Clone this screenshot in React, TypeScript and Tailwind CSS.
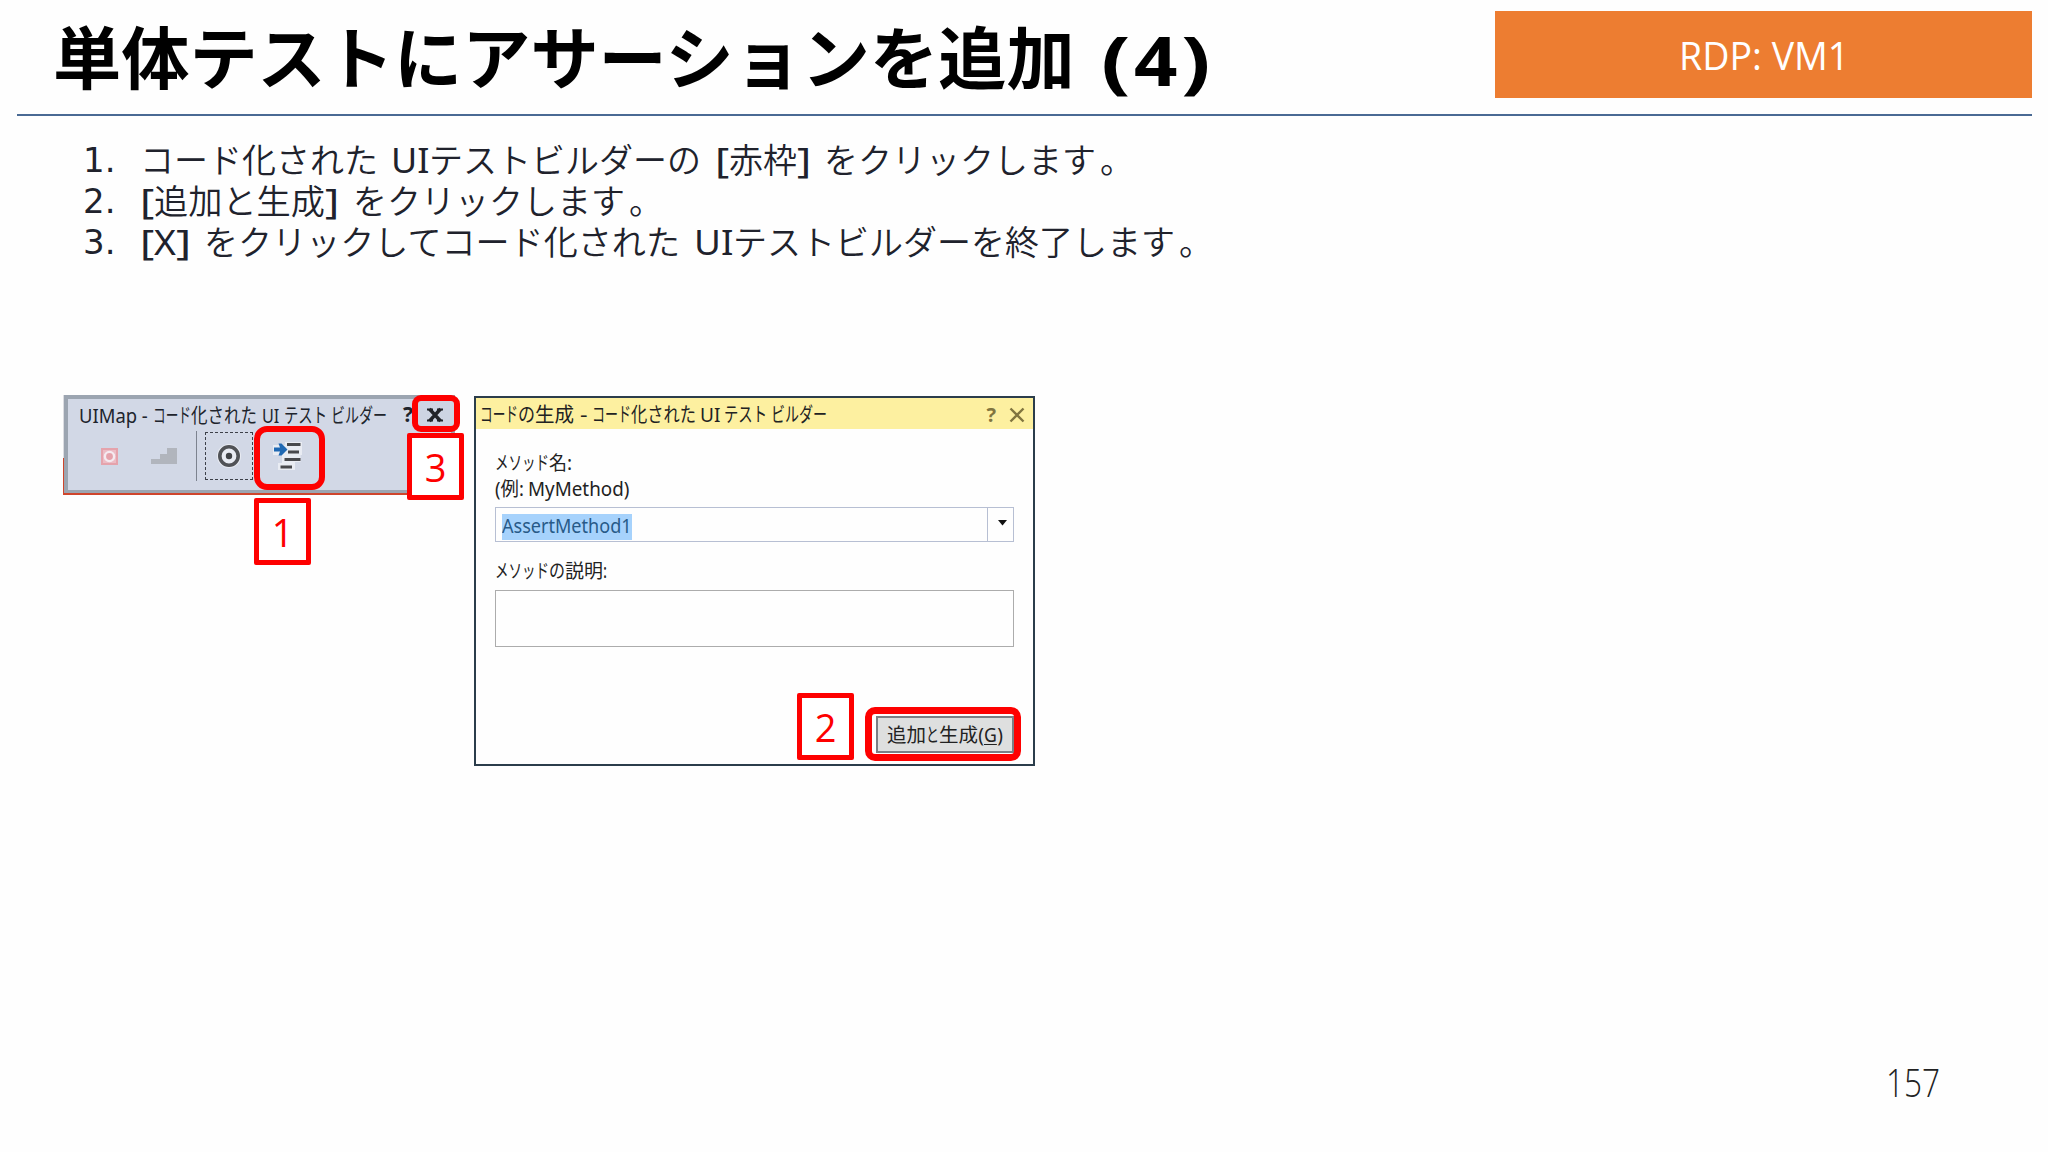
import React, { useLayoutEffect, useRef, useState } from 'react';

type Segment = [text: string, width: number];

interface RunProps {
  text: string;
  width: number;
  className?: string;
}

// Text squeezed or stretched to a fixed advance width
const Run: React.FC<RunProps> = ({ text, width, className = '' }) => {
  const ref = useRef<HTMLSpanElement>(null);
  const [scale, setScale] = useState(1);

  useLayoutEffect(() => {
    if (ref.current && ref.current.offsetWidth) {
      setScale(width / ref.current.offsetWidth);
    }
  }, [text, width]);

  return (
    <span className="inline-block whitespace-pre" style={{ width }}>
      <span
        ref={ref}
        className={`inline-block origin-left ${className}`}
        style={{ transform: `scaleX(${scale})` }}
      >
        {text}
      </span>
    </span>
  );
};

interface LineProps {
  segments: Segment[];
  className?: string;
  latinClassName?: string;
}

// An empty segment is a gap of the given width
const Line: React.FC<LineProps> = ({ segments, className = '', latinClassName = '' }) => (
  <div className={`flex ${className}`}>
    {segments.map(([text, width], i) =>
      text ? (
        <Run key={i} text={text} width={width} className={text.charCodeAt(0) < 128 ? latinClassName : ''} />
      ) : (
        <span key={i} style={{ width }} />
      )
    )}
  </div>
);

const STEPS: { no: string; segments: Segment[] }[] = [
  {
    no: '1.',
    segments: [
      ['コード化された', 238], ['', 13], ['UI', 38], ['テストビルダーの', 272], ['', 14], ['[', 14],
      ['赤枠', 68], [']', 14], ['', 13], ['をクリックします', 272], ['', 4], ['。', 34],
    ],
  },
  {
    no: '2.',
    segments: [
      ['[', 14], ['追加と生成', 171], [']', 14], ['', 14], ['をクリックします', 272], ['', 4], ['。', 34],
    ],
  },
  {
    no: '3.',
    segments: [
      ['[', 14], ['X', 22], [']', 15], ['', 13], ['をクリックしてコード化された', 476], ['', 14],
      ['UI', 39], ['テストビルダーを終了します', 442], ['', 4], ['。', 34],
    ],
  },
];

const Marker: React.FC<{ no: number; className: string }> = ({ no, className }) => (
  <div
    className={`absolute flex h-[67px] w-[57px] items-center justify-center rounded-[2px] border-[5px] border-[#fe0000] bg-white font-['Open_Sans',sans-serif] text-[38px] leading-none text-[#fe0000] ${className}`}
  >
    {no}
  </div>
);

const BuilderWindow = () => (
  <div className="relative flex h-[100px] w-[392px] border-b-2 border-b-[#cf452c]">
    {/* Sliver of the window behind */}
    <div className="flex w-px flex-col justify-end bg-[#dcdde2]">
      <div className="h-[35px] bg-[#cf452c]" />
    </div>
    <div className="h-[98px] grow border-4 border-b-[3px] border-[#9ca5b1] bg-[#d2d8e6]">
      <div className="flex h-[31px] items-center pl-[11px] pt-0.5 text-[20px] leading-[26px] text-[#20242c]">
        <Line
          segments={[
            ['UIMap -', 69], ['', 5], ['コード', 38], ['化された', 66], ['', 5], ['UI', 17],
            ['', 5], ['テスト', 43], ['', 4], ['ビルダー', 56],
          ]}
        />
        <span className="-mt-1 ml-[16px] text-[21px] font-bold">?</span>
      </div>
      <div className="flex h-[52px] items-start">
        <svg className="ml-[33px] mt-[18px]" width="17" height="17" viewBox="0 0 17 17" fill="none">
          <rect x="1" y="1" width="15" height="15" fill="#ecbcc5" stroke="#e5a3ac" strokeWidth="2" />
          <circle cx="8.500" cy="8.500" r="4.600" fill="#e5a3ac" stroke="#f5eaf0" strokeWidth="2.400" />
        </svg>
        <svg className="ml-[33px] mt-[17px]" width="27" height="18" viewBox="0 0 27 18">
          <path d="M0 17V12H9V7H16V1H26V17Z" fill="#b1b5bd" />
        </svg>
        <div className="ml-[18px] mt-px h-[50px] w-px bg-[#7d838f]" />
        <div className="ml-2 mt-[2px] flex h-12 w-12 items-center justify-center border border-dashed border-[#3c4048]">
          <svg width="26" height="26" viewBox="0 0 26 26" fill="none">
            <circle cx="13" cy="13" r="12" fill="#e8ebf2" />
            <circle cx="13" cy="13" r="9.200" stroke="#505256" strokeWidth="3.600" />
            <circle cx="13" cy="13" r="3.200" fill="#404246" />
          </svg>
        </div>
        <svg className="ml-[20px] mt-[11px]" width="32" height="30" viewBox="0 0 32 30">
          <path d="M0 4H12V1H29V14H27.500V21H22V29H5V22H9V14H0Z" fill="#e9ecf3" />
          <path d="M14 3.500H27.500M15 11H26M11.500 18.500H27.500M7.500 26H19" stroke="#48494d" strokeWidth="3.200" />
          <path d="M1 6.500H7L5.500 2.500H8.500L14.500 8.500L8.500 14.500H5.500L7 10.500H1Z" fill="#1f68b3" />
        </svg>
      </div>
    </div>

    {/* Callouts */}
    <div className="absolute left-[191px] top-[31px] h-[64px] w-[71px] rounded-[13px] border-[6px] border-[#fe0000]" />
    <div className="absolute left-[349px] top-0 flex h-[37px] w-[48px] items-center justify-center rounded-[9px] border-[6px] border-[#fe0000] bg-[#cdd4e3]">
      <svg className="-ml-0.5 mt-[2px]" width="20" height="16" viewBox="0 0 20 16">
        <path d="M2 2.500H8M12 2.500H18M2 13.500H8M12 13.500H18" stroke="#22242a" strokeWidth="2" />
        <path d="M4.500 2L15.500 14M15.500 2L4.500 14" stroke="#22242a" strokeWidth="3.400" />
      </svg>
    </div>
    <Marker no={3} className="left-[344px] top-[38px]" />
    <Marker no={1} className="left-[191px] top-[103px]" />
  </div>
);

const GenerateDialog = () => (
  <div className="relative flex h-[370px] w-[561px] flex-col border-2 border-[#2b3d4b] bg-[#fefefe] text-[19px] text-[#222]">
    <div className="flex h-[31px] shrink-0 items-center bg-[#fdf0a0] pl-[4px] pt-0.5 text-[20px] leading-[26px]">
      <Line
        segments={[
          ['コード', 38], ['の', 17], ['生成', 39], ['', 6], ['-', 7], ['', 5], ['コード', 39], ['化された', 65],
          ['', 4], ['UI', 20], ['', 4], ['テスト', 43], ['', 4], ['ビルダー', 56],
        ]}
      />
      <span className="ml-auto font-bold text-[#81753f]">?</span>
      <svg className="ml-[13px] mr-[8px]" width="16" height="16" viewBox="0 0 16 16">
        <path d="M1.500 1.500L14.500 14.500M14.500 1.500L1.500 14.500" stroke="#81753f" strokeWidth="2.400" />
      </svg>
    </div>

    <div className="flex grow flex-col px-[19px]">
      <div className="mt-[21px] leading-[26px]">
        <Line segments={[['メソッド', 54], ['名', 18], [':', 5]]} />
        <Line segments={[['(例:', 29], ['', 4], ['MyMethod)', 101]]} />
      </div>
      <div className="mt-[5px] flex h-[35px] w-[519px] shrink-0 border-[1.5px] border-[#b7bfd3] text-[20px]">
        <div className="grow pl-[6px] pt-[3px]">
          <span className="inline-block h-[26px] bg-[#a6d2fc] leading-[24px] text-[#285a88]">
            <Run text="AssertMethod1" width={130} />
          </span>
        </div>
        <div className="flex w-[26px] items-center justify-center border-l border-[#b7bfd3] pb-1 pl-1">
          <svg width="9" height="6" viewBox="0 0 9 6">
            <path d="M0 0H9L4.500 5.500Z" fill="#111" />
          </svg>
        </div>
      </div>
      <Line className="mt-[16px] leading-[26px]" segments={[['メソッド', 54], ['の', 16], ['説明', 38], [':', 4]]} />
      <div className="mt-[6px] h-[57px] w-[519px] shrink-0 border-[1.5px] border-[#acacac]" />
      <button className="ml-auto mt-[69px] flex h-[37px] w-[138px] items-center justify-center border-2 border-[#7b7e84] bg-[#dedfdf] leading-[26px]">
        <Run text="追加" width={39} />
        <Run text="と" width={13} />
        <Run text="生成" width={39} />
        <Run text="(" width={6} />
        <Run text="G" width={13} className="underline underline-offset-2" />
        <Run text=")" width={6} />
      </button>
    </div>

    {/* Callouts */}
    <div className="absolute left-[389px] top-[309px] h-[54px] w-[156px] rounded-[10px] border-[7px] border-[#fe0000]" />
    <Marker no={2} className="left-[321px] top-[295px]" />
  </div>
);

export default function App() {
  return (
    <div className="flex h-[1152px] w-[2048px] flex-col overflow-hidden bg-[#fefefe] font-['Noto_Sans','Noto_Sans_CJK_JP',sans-serif]">
      <header className="ml-[17px] flex h-[116px] w-[2015px] shrink-0 justify-between border-b-2 border-[#4a6a94]">
        <h1 className="flex items-center pl-[36px] font-bold leading-[90px] text-black">
          <span className="-mt-1 font-['Noto_Sans_CJK_JP',sans-serif] text-[68px]">
            <Run text="単体テストにアサーションを追加" width={1022} />
          </span>
          <Line
            className="pt-[3px] text-[69px]"
            segments={[['', 26], ['(', 29], ['', 4], ['4', 43], ['', 4], [')', 29]]}
          />
        </h1>
        <div className="mt-[11px] flex h-[87px] w-[537px] items-center justify-center bg-[#ed7d31] pt-px text-[38px] text-white font-['Open_Sans',sans-serif]">
          <Run text="RDP: VM1" width={170} />
        </div>
      </header>

      <ol className="mt-[24px] pl-[83px] text-[34px] font-[350] leading-[41px] text-[#20222c]">
        {STEPS.map((step) => (
          <li key={step.no} className="flex h-[41px]">
            <span className="w-[57px] font-['DejaVu_Sans',sans-serif] font-normal">
              <Run text={step.no} width={32} />
            </span>
            <Line segments={step.segments} latinClassName="font-normal" />
          </li>
        ))}
      </ol>

      <div className="mt-[132px] flex items-start pl-[63px]">
        <BuilderWindow />
        <div className="ml-[19px] mt-px">
          <GenerateDialog />
        </div>
      </div>

      <footer className="mb-[41px] mr-[108px] mt-auto text-right font-['Open_Sans',sans-serif] text-[38px] font-light text-[#222]">
        <Run text="157" width={54} />
      </footer>
    </div>
  );
}
